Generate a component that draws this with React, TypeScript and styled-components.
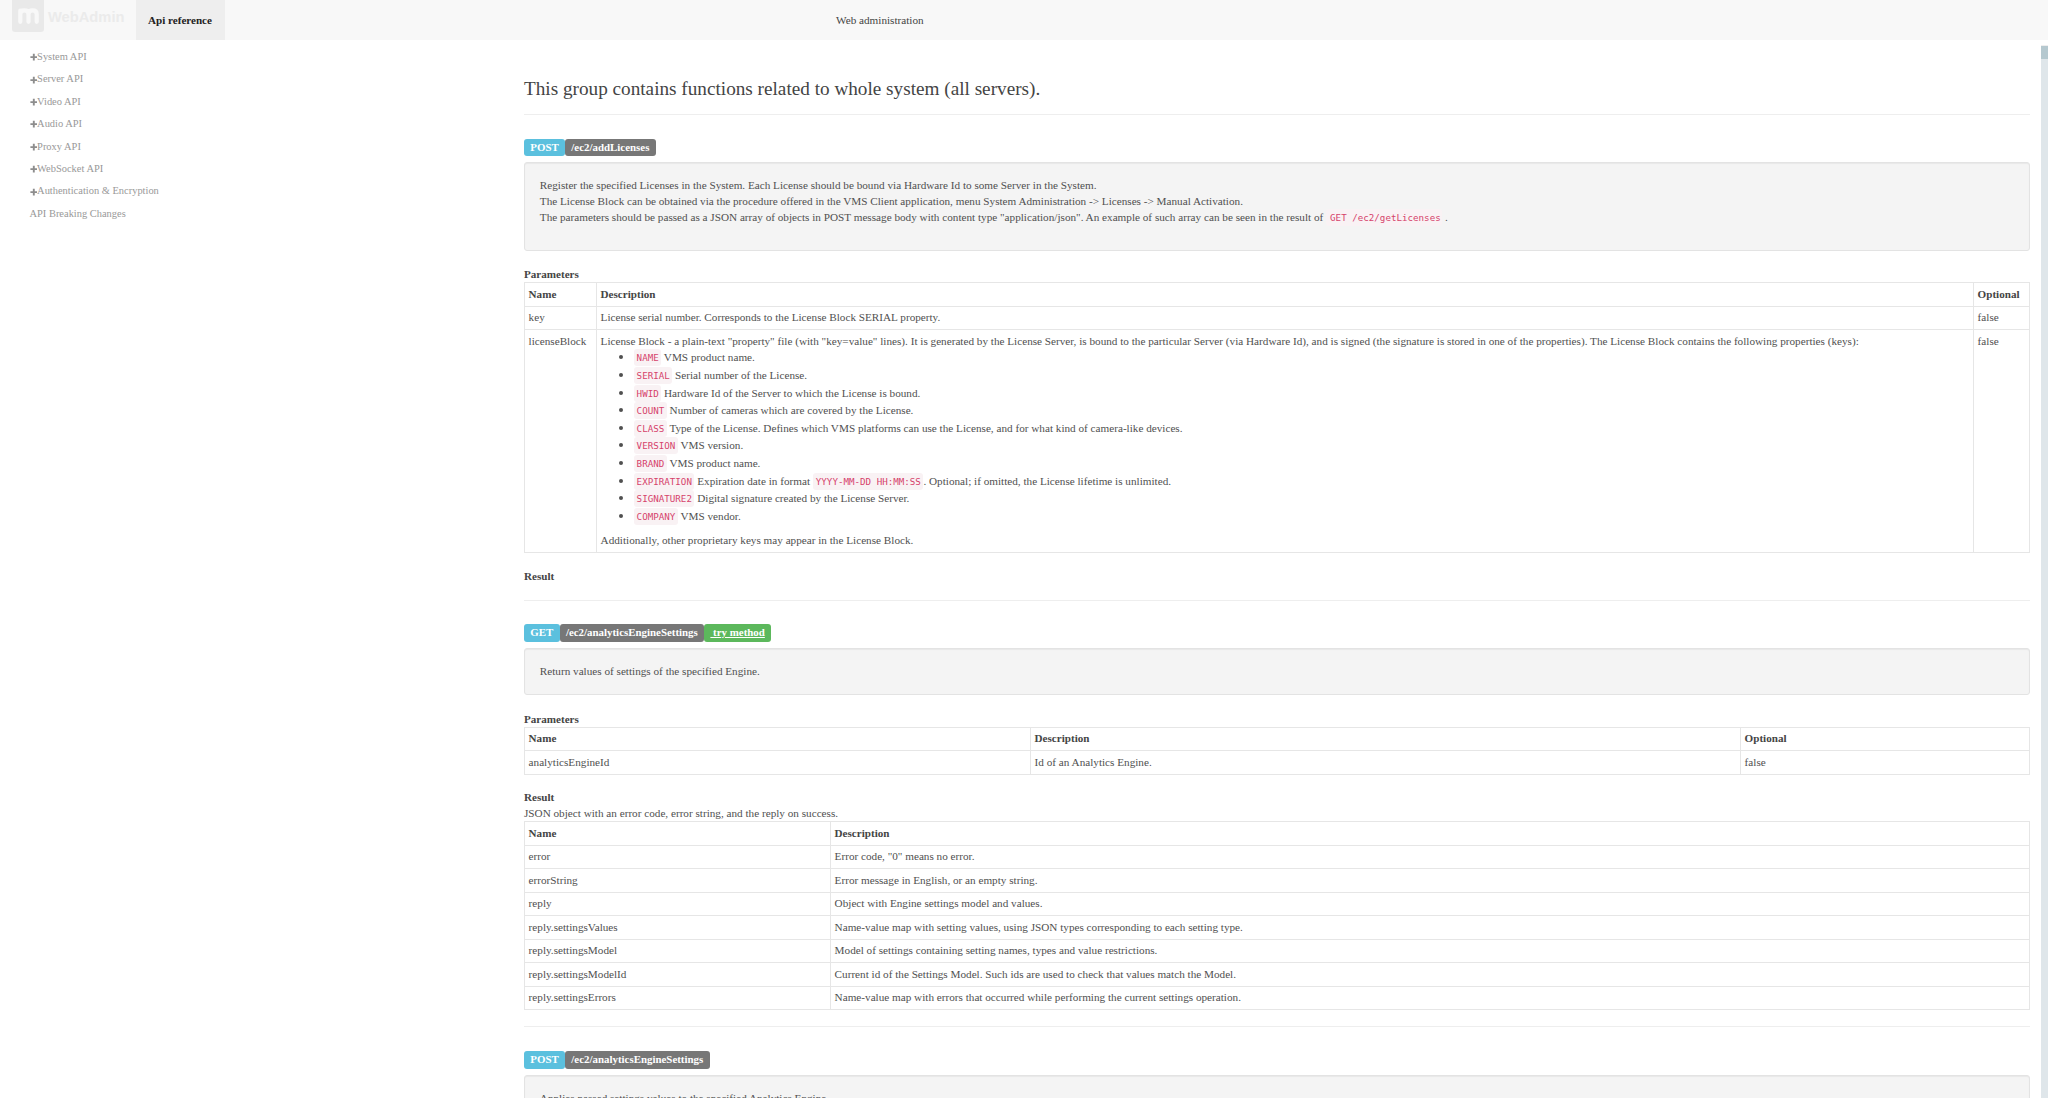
import React from 'react';
import styled, { createGlobalStyle } from 'styled-components';

const Global = createGlobalStyle`
  * { box-sizing: border-box; }
  html, body { margin: 0; height: 100%; overflow: hidden; background: #fff; }
  body {
    font-family: "Liberation Serif", "Times New Roman", serif;
    font-size: 11.2px;
    line-height: 15.68px;
    color: #505050;
  }
`;

const Page = styled.div`
  height: 1098px;
  display: flex;
  flex-direction: column;
  overflow: hidden;
`;

const Navbar = styled.header`
  flex: none;
  height: 40px;
  background: #f8f8f8;
  display: grid;
  grid-template-columns: 136px 89px 1fr;
  grid-template-rows: 40px;
`;

const Brand = styled.div`
  display: flex;
  align-items: flex-start;
  padding-left: 12px;
  gap: 4px;
  color: #ebebeb;
  font: bold 14.7px/34px "Liberation Sans", Arial, sans-serif;
`;

const Tab = styled.div`
  background: #eee;
  color: #222;
  font-size: 11.1px;
  font-weight: bold;
  line-height: 41px;
  padding-left: 12px;
  white-space: nowrap;
`;

const NavTitle = styled.div`
  padding-left: 611px;
  line-height: 41px;
  color: #444;
`;

const Body = styled.div`
  flex: 1;
  min-height: 0;
  display: grid;
  grid-template-columns: 524px 1506px 11px 7px;
  grid-template-rows: 1058px;
`;

const Sidebar = styled.nav`
  padding: 6px 0 0 29.5px;
  color: #999;
  font-size: 10.45px;
`;

const SideItem = styled.div`
  height: 22.4px;
  line-height: 22.4px;
  display: flex;
  align-items: center;
`;

const Track = styled.div`
  grid-column: 4;
  margin-top: 5px;
  background: #dfe6ea;
  border-top: 1px solid #eee;
`;

const Thumb = styled.div`
  height: 13px;
  background: #b5c8cf;
`;

const Content = styled.main`
  min-width: 0;
`;

const Heading = styled.h3`
  margin: 38px 0 0;
  font-weight: normal;
  font-size: 19.22px;
  line-height: 21px;
  color: #444;
`;

const Rule = styled.hr<{ $top: number; $bottom?: number }>`
  border: 0;
  height: 1px;
  background: #eee;
  margin: ${(p) => p.$top}px 0 ${(p) => p.$bottom ?? 24}px;
`;

const Labels = styled.div`
  display: flex;
  height: 17.5px;
  margin-bottom: 6.2px;
`;

const Label = styled.span<{ $bg: string; $link?: boolean }>`
  background: ${(p) => p.$bg};
  color: #fff;
  font-size: 10.9px;
  font-weight: bold;
  border-radius: 3px;
  padding: 0 6.3px;
  line-height: 17px;
  white-space: pre;
  text-decoration: ${(p) => (p.$link ? 'underline' : 'none')};
`;

const Well = styled.div<{ $h: number }>`
  height: ${(p) => p.$h}px;
  background: #f4f4f4;
  border: 1px solid #e3e3e3;
  border-radius: 3px;
  box-shadow: inset 0 1px 1px rgba(0, 0, 0, 0.05);
  padding: 15px 14.8px;
`;

const Title = styled.div<{ $top: number }>`
  margin-top: ${(p) => p.$top}px;
  height: 15.2px;
  font-size: 11.1px;
  font-weight: bold;
  color: #444;
`;

const Table = styled.table`
  width: 1505px;
  table-layout: fixed;
  border-collapse: collapse;
`;

const Row = styled.tr<{ $h?: number }>`
  height: ${(p) => p.$h ?? 23.5}px;
`;

const cell = `
  border: 1px solid #e6e6e6;
  padding: 3.5px 3.6px 3px;
  text-align: left;
  vertical-align: top;
`;
const Th = styled.th`${cell} color: #444; font-size: 11.1px;`;
const Td = styled.td`${cell}`;

const Code = styled.code`
  font-family: "DejaVu Sans Mono", monospace;
  font-size: 9.2px;
  line-height: 1;
  color: #d6426b;
  background: #f9f2f4;
  border-radius: 3px;
  padding: 3px 2.5px 3px 3px;
`;

const WellCode = styled(Code)`
  padding: 3px 1.5px 3px 4px;
`;

const List = styled.ul`
  margin: 0 0 7.4px;
  padding-left: 33px;
`;

const Item = styled.li`
  height: 17.63px;

  &::marker {
    font-size: 13px;
  }
`;

const Plus = () => (
  <svg width="7.6" height="8" viewBox="0 0 7.6 8">
    <path d="M3.8 .7v6.8M.4 4.1h6.8" stroke="#8d8d8d" strokeWidth="1.9" />
  </svg>
);

const Logo = () => (
  <svg width="32" height="32" viewBox="0 0 32 32">
    <path d="M0 0h32v29a3 3 0 0 1-3 3H3a3 3 0 0 1-3-3z" fill="#e9e9e9" />
    <path
      d="M8.3 21.8V10.6M8.3 14.2q0-3.8 4.1-3.8t4.1 3.8v7.6M16.5 14.2q0-3.8 4.1-3.8t4.1 3.8v7.6"
      fill="none"
      stroke="#f8f8f8"
      strokeWidth="4.2"
      strokeLinecap="round"
    />
  </svg>
);

const groups = ['System API', 'Server API', 'Video API', 'Audio API', 'Proxy API', 'WebSocket API', 'Authentication & Encryption'];

const keys: [string, React.ReactNode][] = [
  ['NAME', 'VMS product name.'],
  ['SERIAL', 'Serial number of the License.'],
  ['HWID', 'Hardware Id of the Server to which the License is bound.'],
  ['COUNT', 'Number of cameras which are covered by the License.'],
  ['CLASS', 'Type of the License. Defines which VMS platforms can use the License, and for what kind of camera-like devices.'],
  ['VERSION', 'VMS version.'],
  ['BRAND', 'VMS product name.'],
  ['EXPIRATION', <>Expiration date in format <Code>YYYY-MM-DD HH:MM:SS</Code>. Optional; if omitted, the License lifetime is unlimited.</>],
  ['SIGNATURE2', 'Digital signature created by the License Server.'],
  ['COMPANY', 'VMS vendor.'],
];

const results = [
  ['error', 'Error code, "0" means no error.'],
  ['errorString', 'Error message in English, or an empty string.'],
  ['reply', 'Object with Engine settings model and values.'],
  ['reply.settingsValues', 'Name-value map with setting values, using JSON types corresponding to each setting type.'],
  ['reply.settingsModel', 'Model of settings containing setting names, types and value restrictions.'],
  ['reply.settingsModelId', 'Current id of the Settings Model. Such ids are used to check that values match the Model.'],
  ['reply.settingsErrors', 'Name-value map with errors that occurred while performing the current settings operation.'],
];

const Columns = ({ widths }: { widths: number[] }) => (
  <colgroup>{widths.map((w) => <col key={w} style={{ width: w }} />)}</colgroup>
);

const Head = ({ names }: { names: string[] }) => (
  <thead><Row>{names.map((n) => <Th key={n}>{n}</Th>)}</Row></thead>
);

const BLUE = '#5bc0de';
const GRAY = '#777';
const GREEN = '#5cb85c';

export default function App() {
  return (
    <>
      <Global />
      <Page>
        <Navbar>
          <Brand><Logo />WebAdmin</Brand>
          <Tab>Api reference</Tab>
          <NavTitle>Web administration</NavTitle>
        </Navbar>
        <Body>
          <Sidebar>
            {groups.map((g) => <SideItem key={g}><Plus />{g}</SideItem>)}
            <SideItem>API Breaking Changes</SideItem>
          </Sidebar>
          <Content>
            <Heading>This group contains functions related to whole system (all servers).</Heading>
            <Rule $top={14.5} />
            <Labels><Label $bg={BLUE}>POST</Label><Label $bg={GRAY}>/ec2/addLicenses</Label></Labels>
            <Well $h={88.5}>
              Register the specified Licenses in the System. Each License should be bound via Hardware Id to some Server in the System.<br />
              The License Block can be obtained via the procedure offered in the VMS Client application, menu System Administration -&gt; Licenses -&gt; Manual Activation.<br />
              The parameters should be passed as a JSON array of objects in POST message body with content type "application/json". An example of such array can be seen in the result of <WellCode>GET /ec2/getLicenses</WellCode> .
            </Well>
            <Title $top={16.2}>Parameters</Title>
            <Table>
              <Columns widths={[72, 1377, 56]} />
              <Head names={['Name', 'Description', 'Optional']} />
              <tbody>
                <Row><Td>key</Td><Td>License serial number. Corresponds to the License Block SERIAL property.</Td><Td>false</Td></Row>
                <Row $h={223}>
                  <Td>licenseBlock</Td>
                  <Td>
                    License Block - a plain-text "property" file (with "key=value" lines). It is generated by the License Server, is bound to the particular Server (via Hardware Id), and is signed (the signature is stored in one of the properties). The License Block contains the following properties (keys):
                    <List>{keys.map(([k, d]) => <Item key={k}><Code>{k}</Code> {d}</Item>)}</List>
                    Additionally, other proprietary keys may appear in the License Block.
                  </Td>
                  <Td>false</Td>
                </Row>
              </tbody>
            </Table>
            <Title $top={15.7}>Result</Title>
            <Rule $top={16} $bottom={23.5} />
            <Labels><Label $bg={BLUE}>GET</Label><Label $bg={GRAY}>/ec2/analyticsEngineSettings</Label><Label $bg={GREEN} $link> try method</Label></Labels>
            <Well $h={47.3}>Return values of settings of the specified Engine.</Well>
            <Title $top={16.2}>Parameters</Title>
            <Table>
              <Columns widths={[506, 710, 289]} />
              <Head names={['Name', 'Description', 'Optional']} />
              <tbody><Row><Td>analyticsEngineId</Td><Td>Id of an Analytics Engine.</Td><Td>false</Td></Row></tbody>
            </Table>
            <Title $top={15.7}>Result</Title>
            <div>JSON object with an error code, error string, and the reply on success.</div>
            <Table>
              <Columns widths={[306, 1199]} />
              <Head names={['Name', 'Description']} />
              <tbody>{results.map(([n, d]) => <Row key={n}><Td>{n}</Td><Td>{d}</Td></Row>)}</tbody>
            </Table>
            <Rule $top={16} $bottom={23.8} />
            <Labels><Label $bg={BLUE}>POST</Label><Label $bg={GRAY}>/ec2/analyticsEngineSettings</Label></Labels>
            <Well $h={60}>Applies passed settings values to the specified Analytics Engine.</Well>
          </Content>
          <Track><Thumb /></Track>
        </Body>
      </Page>
    </>
  );
}
